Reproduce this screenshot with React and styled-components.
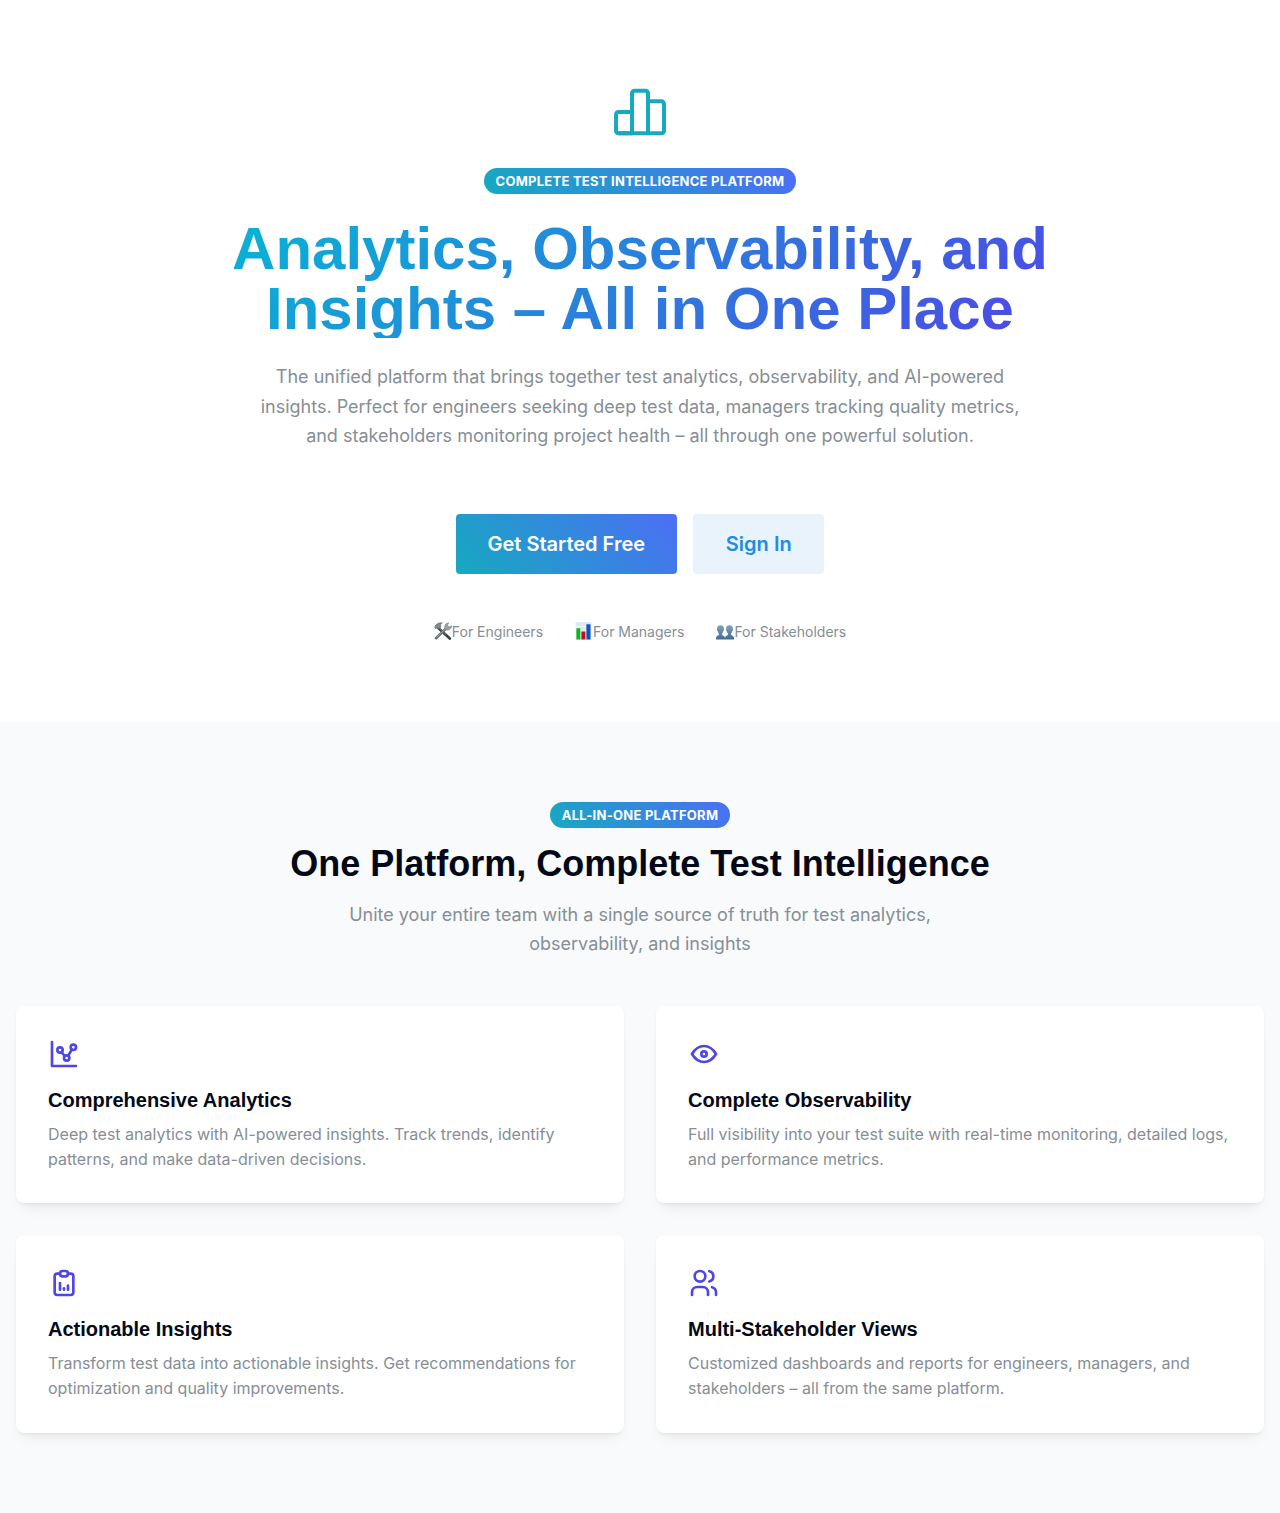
import React from 'react';
import styled, { createGlobalStyle } from 'styled-components';

const GlobalStyle = createGlobalStyle`
  *, *::before, *::after { box-sizing: border-box; }
  body {
    margin: 0;
    background: #fff;
    color: #020817;
    font-family: Inter, sans-serif;
    font-size: 16px;
    line-height: 1.55;
  }
  h1, h2, h3, p { margin: 0; }
`;

const accent = 'linear-gradient(45deg, #15aabf 0%, #4c6ef5 100%)';
const headingFont = '"Nimbus Sans", "Liberation Sans", Arial, sans-serif';

const Hero = styled.section`
  display: flex;
  flex-direction: column;
  align-items: center;
  padding: 80px 16px;
  text-align: center;
`;

const Icon = styled.svg.attrs({
  viewBox: '0 0 24 24',
  fill: 'none',
  stroke: 'currentColor',
  strokeLinecap: 'round',
  strokeLinejoin: 'round',
})`
  display: block;
  flex: none;
  width: ${(p) => p.$size}px;
  height: ${(p) => p.$size}px;
  color: ${(p) => p.$color};
  stroke-width: ${(p) => p.$stroke};
`;

const Badge = styled.span`
  display: inline-flex;
  align-items: center;
  height: 26px;
  margin-top: ${(p) => p.$top || 0}px;
  padding: 0 12px;
  border-radius: 1000px;
  background: ${accent};
  color: #fff;
  font-size: 13px;
  font-weight: 700;
  letter-spacing: 0.02em;
  line-height: 24px;
  text-transform: uppercase;
  white-space: nowrap;
`;

const Heading = styled.h1`
  width: 848px;
  height: 120px;
  margin-top: 24px;
  padding-top: 1px;
  background: linear-gradient(135deg, #06b6d4 0%, #4f46e5 100%);
  background-clip: text;
  -webkit-background-clip: text;
  color: transparent;
  font-family: ${headingFont};
  font-size: 60px;
  font-weight: 700;
  line-height: 60px;
`;

const Lead = styled.p`
  max-width: ${(p) => p.$width}px;
  margin-top: ${(p) => p.$top}px;
  color: #868e96;
  font-size: 18px;
  line-height: 1.625;
`;

const Actions = styled.div`
  display: flex;
  gap: 16px;
  margin-top: 63.75px;
`;

const Button = styled.button`
  height: 60px;
  padding: 0 ${(p) => (p.$primary ? 32 : 32.8)}px;
  border: 0;
  border-radius: 4px;
  background: ${(p) => (p.$primary ? accent : 'rgba(34, 139, 230, 0.1)')};
  color: ${(p) => (p.$primary ? '#fff' : '#228be6')};
  font-family: inherit;
  font-size: 20px;
  font-weight: 600;
  line-height: 1;
  white-space: nowrap;
`;

const Audiences = styled.div`
  display: flex;
  gap: 32px;
  margin-top: 48px;
`;

const Audience = styled.div`
  display: flex;
  align-items: center;
  height: 20px;
  color: #868e96;
  font-size: 14px;
  line-height: 20px;
`;

const Emoji = styled.svg.attrs({ viewBox: '0 0 18 18', 'aria-hidden': true })`
  display: block;
  flex: none;
  width: 18px;
  height: 18px;
  margin-bottom: 2px;
`;

const Platform = styled.section`
  padding: 80px 16px;
  background: #f8fafc;
`;

const Intro = styled.div`
  display: flex;
  flex-direction: column;
  align-items: center;
  text-align: center;
`;

const SectionTitle = styled.h2`
  margin-top: 16px;
  font-family: ${headingFont};
  font-size: 36px;
  font-weight: 700;
  line-height: 40px;
`;

const Grid = styled.div`
  display: grid;
  grid-template-columns: repeat(2, 1fr);
  gap: 32px;
  margin-top: 47.6px;
`;

const Card = styled.article`
  padding: 32px;
  border-radius: 8px;
  background: #fff;
  box-shadow:
    0 1px 3px rgba(0, 0, 0, 0.05),
    0 10px 15px -5px rgba(0, 0, 0, 0.05),
    0 7px 7px -5px rgba(0, 0, 0, 0.04);
`;

const CardTitle = styled.h3`
  margin-top: 16px;
  font-family: ${headingFont};
  font-size: 20px;
  font-weight: 700;
  line-height: 28px;
`;

const CardText = styled.p`
  margin-top: 8px;
  color: #868e96;
`;

function ToolsEmoji() {
  return (
    <Emoji>
      <path d="M4.6 6.2 15.8 16.6" stroke="#3d4144" strokeWidth="2.7" strokeLinecap="round" />
      <path d="M5.5 6.4 12 12.4" stroke="#85898c" strokeWidth="0.8" />
      <path d="M0.6 5.4C1.6 2.4 4 0.4 8.4 0.8C7 1.6 6.4 2.4 6.6 3.4L6.9 5L4.8 7.1L3.4 5.7L1.9 6.8Z" fill="#838a8e" stroke="#55595c" strokeWidth="0.5" />
      <path d="M2 16.2 12.6 5.9" stroke="#656b6f" strokeWidth="2.6" strokeLinecap="round" />
      <path d="M2.4 15.5 12.2 6" stroke="#a9b0b4" strokeWidth="0.8" />
      <path d="M11 6.9C10 4 11.5 1 14.8 0.8L13.4 3L15 4.9L17.6 3.8C17.7 6.6 15 8.8 12.3 7.8Z" fill="#99a1a6" stroke="#71787c" strokeWidth="0.5" />
    </Emoji>
  );
}

function ChartEmoji() {
  return (
    <Emoji>
      <rect x="0.6" y="0.2" width="15.8" height="17.6" fill="#dfe8f0" />
      <path d="M0.6 4.5H16.4M0.6 9H16.4M0.6 13.5H16.4" stroke="#f3f7fa" strokeWidth="0.8" />
      <rect x="1.4" y="6.3" width="3.9" height="11.2" fill="#0fb51c" />
      <rect x="6.4" y="9.5" width="3.9" height="8" fill="#c70d1c" />
      <rect x="11.4" y="2.3" width="4.1" height="15.2" fill="#0b55bd" />
    </Emoji>
  );
}

function PeopleEmoji() {
  return (
    <Emoji>
      <defs>
        <linearGradient id="bust" x1="0" y1="0" x2="0" y2="1">
          <stop offset="0" stopColor="#7fa3bd" />
          <stop offset="1" stopColor="#416b91" />
        </linearGradient>
      </defs>
      {[0, 9].map((x) => (
        <path
          key={x}
          transform={`translate(${x} 3)`}
          fill="url(#bust)"
          d="M4.5 0.2C7 0.2 8 1.8 7.8 3.9C8.3 4.2 8 5.7 7.4 5.9C7.1 7.1 6.6 7.9 6.1 8.4V9.5C6.3 10.6 9 10.8 9 13V14.6H0V13C0 10.8 2.7 10.6 2.9 9.5V8.4C2.4 7.9 1.9 7.1 1.6 5.9C1 5.7 0.7 4.2 1.2 3.9C1 1.8 2 0.2 4.5 0.2Z"
        />
      ))}
    </Emoji>
  );
}

const audiences = [
  { label: 'For Engineers', Picture: ToolsEmoji },
  { label: 'For Managers', Picture: ChartEmoji },
  { label: 'For Stakeholders', Picture: PeopleEmoji },
];

const features = [
  {
    title: 'Comprehensive Analytics',
    text: 'Deep test analytics with AI-powered insights. Track trends, identify patterns, and make data-driven decisions.',
    paths: [
      'M3 3v18h18',
      'M9 9m-2 0a2 2 0 1 0 4 0a2 2 0 1 0 -4 0',
      'M19 7m-2 0a2 2 0 1 0 4 0a2 2 0 1 0 -4 0',
      'M14 15m-2 0a2 2 0 1 0 4 0a2 2 0 1 0 -4 0',
      'M10.16 10.62l2.34 2.88',
      'M15.088 13.328l2.837 -4.586',
    ],
  },
  {
    title: 'Complete Observability',
    text: 'Full visibility into your test suite with real-time monitoring, detailed logs, and performance metrics.',
    paths: [
      'M10 12a2 2 0 1 0 4 0a2 2 0 0 0 -4 0',
      'M21 12c-2.4 4 -5.4 6 -9 6c-3.6 0 -6.6 -2 -9 -6c2.4 -4 5.4 -6 9 -6c3.6 0 6.6 2 9 6',
    ],
  },
  {
    title: 'Actionable Insights',
    text: 'Transform test data into actionable insights. Get recommendations for optimization and quality improvements.',
    paths: [
      'M9 5h-2a2 2 0 0 0 -2 2v12a2 2 0 0 0 2 2h10a2 2 0 0 0 2 -2v-12a2 2 0 0 0 -2 -2h-2',
      'M9 3m0 2a2 2 0 0 1 2 -2h2a2 2 0 0 1 2 2v0a2 2 0 0 1 -2 2h-2a2 2 0 0 1 -2 -2z',
      'M9 17v-5',
      'M12 17v-1',
      'M15 17v-3',
    ],
  },
  {
    title: 'Multi-Stakeholder Views',
    text: 'Customized dashboards and reports for engineers, managers, and stakeholders – all from the same platform.',
    paths: [
      'M9 7m-4 0a4 4 0 1 0 8 0a4 4 0 1 0 -8 0',
      'M3 21v-2a4 4 0 0 1 4 -4h4a4 4 0 0 1 4 4v2',
      'M16 3.13a4 4 0 0 1 0 7.75',
      'M21 21v-2a4 4 0 0 0 -3 -3.85',
    ],
  },
];

export default function App() {
  return (
    <>
      <GlobalStyle />
      <Hero>
        <Icon $size={64} $color="#15aabf" $stroke={1.5}>
          <path d="M9 12h-5a1 1 0 0 0 -1 1v6a1 1 0 0 0 1 1h5" />
          <path d="M9 20v-15a1 1 0 0 1 1 -1h4a1 1 0 0 1 1 1v15" />
          <path d="M15 8h5a1 1 0 0 1 1 1v10a1 1 0 0 1 -1 1h-16" />
        </Icon>
        <Badge $top={24}>Complete Test Intelligence Platform</Badge>
        <Heading>Analytics, Observability, and Insights – All in One Place</Heading>
        <Lead $width={768} $top={24.25}>
          The unified platform that brings together test analytics, observability, and AI-powered
          insights. Perfect for engineers seeking deep test data, managers tracking quality metrics,
          and stakeholders monitoring project health – all through one powerful solution.
        </Lead>
        <Actions>
          <Button $primary>Get Started Free</Button>
          <Button>Sign In</Button>
        </Actions>
        <Audiences>
          {audiences.map(({ label, Picture }) => (
            <Audience key={label}>
              <Picture />
              {label}
            </Audience>
          ))}
        </Audiences>
      </Hero>
      <Platform>
        <Intro>
          <Badge>All-in-One Platform</Badge>
          <SectionTitle>One Platform, Complete Test Intelligence</SectionTitle>
          <Lead $width={600} $top={16}>
            Unite your entire team with a single source of truth for test analytics, observability,
            and insights
          </Lead>
        </Intro>
        <Grid>
          {features.map((f) => (
            <Card key={f.title}>
              <Icon $size={32} $color="#4f46e5" $stroke={2}>
                {f.paths.map((d) => (
                  <path key={d} d={d} />
                ))}
              </Icon>
              <CardTitle>{f.title}</CardTitle>
              <CardText>{f.text}</CardText>
            </Card>
          ))}
        </Grid>
      </Platform>
    </>
  );
}
